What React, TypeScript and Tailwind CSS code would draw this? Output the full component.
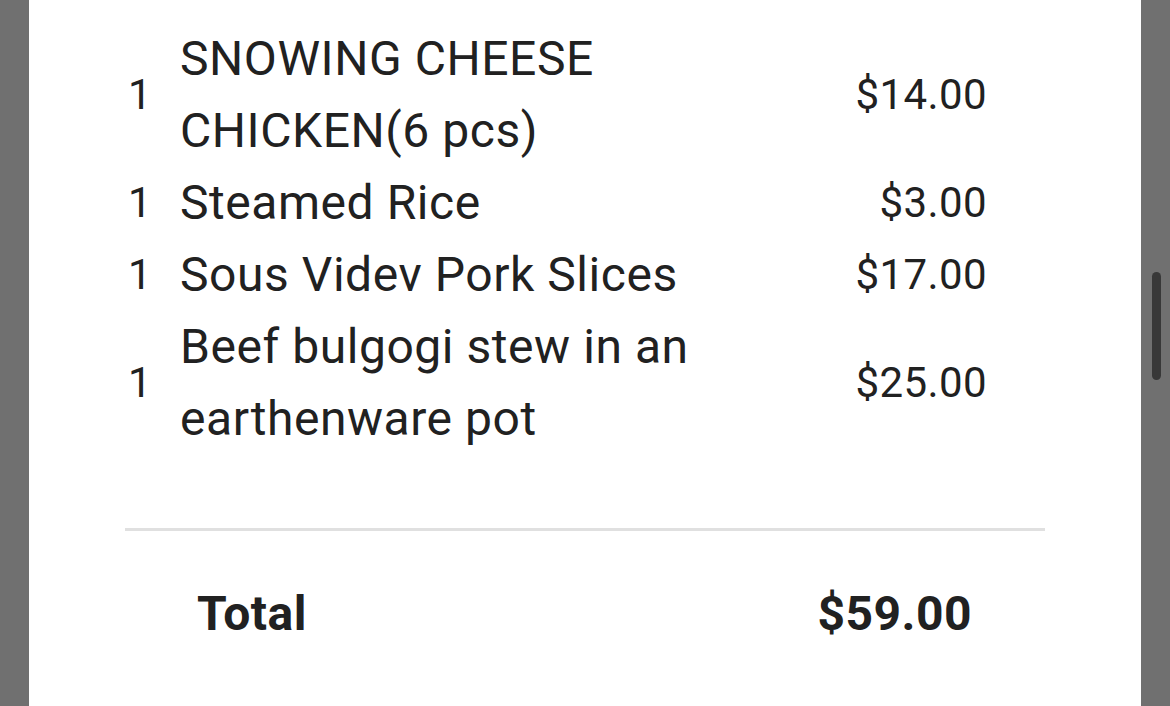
import React from "react";

const items = [
  { qty: 1, name: "SNOWING CHEESE CHICKEN(6 pcs)", price: "$14.00" },
  { qty: 1, name: "Steamed Rice", price: "$3.00" },
  { qty: 1, name: "Sous Videv Pork Slices", price: "$17.00" },
  { qty: 1, name: "Beef bulgogi stew in an earthenware pot", price: "$25.00" },
];

export default function App() {
  return (
    <div
      className="flex h-[706px] w-[1170px] overflow-hidden bg-[#707070] text-[#212121]"
      style={{ fontFamily: "Roboto, 'Noto Sans', sans-serif" }}
    >
      <div className="w-[29px] shrink-0" />
      <div className="flex h-full w-[1112px] shrink-0 flex-col bg-white px-[96px] pt-[23px]">
        <div className="flex flex-col pl-[3px] pr-[58px]">
          {items.map((it, i) => (
            <div key={i} className="grid grid-cols-[52px_580px_1fr] items-center">
              <div className="text-[42px] leading-[72px]">{it.qty}</div>
              <div className="text-[48px] leading-[72px] tracking-[0.55px]">{it.name}</div>
              <div className="text-right text-[42px] leading-[72px] tracking-[0.4px]">{it.price}</div>
            </div>
          ))}
        </div>
        <div className="mt-[73px] h-[3px] w-full bg-[#e0e0e0]" />
        <div className="mt-[47px] flex items-center justify-between pl-[72px] pr-[73px]">
          <div className="text-[48px] font-bold leading-[72px] tracking-[0.5px]">Total</div>
          <div className="text-[48px] font-bold leading-[72px] tracking-[0.5px]">$59.00</div>
        </div>
      </div>
      <div className="flex w-[29px] shrink-0 flex-col items-start pl-[11px] pt-[272px]">
        <div className="h-[108px] w-[9px] rounded-full bg-[#383838]" />
      </div>
    </div>
  );
}
